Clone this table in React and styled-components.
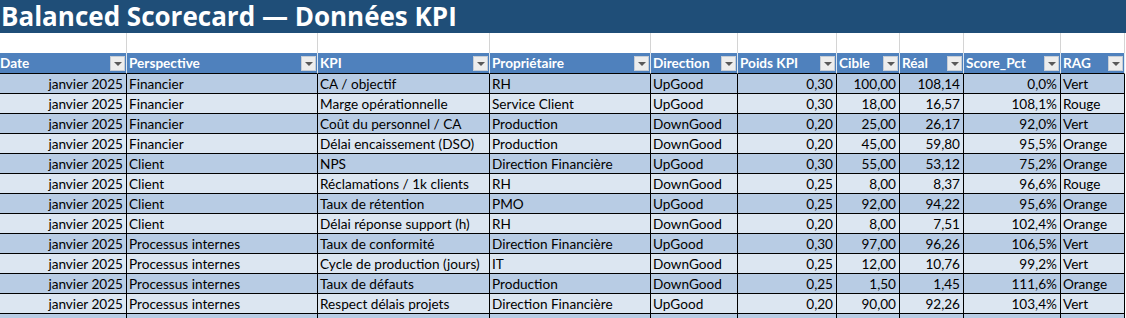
import styled, { createGlobalStyle } from "styled-components";

const GlobalStyle = createGlobalStyle`
  * { box-sizing: border-box; }
  body {
    margin: 0;
    background: #ffffff;
    font-family: Lato, "Open Sans", sans-serif;
  }
`;

const widths = [127, 191, 172, 161, 87, 99, 63, 64, 97, 64];
const template = widths.map((w) => `${w}px`).join(" ") + " 1fr";

const columns = [
  { label: "Date", align: "right", flush: true },
  { label: "Perspective" },
  { label: "KPI" },
  { label: "Propriétaire" },
  { label: "Direction" },
  { label: "Poids KPI", align: "right" },
  { label: "Cible", align: "right" },
  { label: "Réal", align: "right" },
  { label: "Score_Pct", align: "right" },
  { label: "RAG" },
];

const rows = [
  ["Financier", "CA / objectif", "RH", "UpGood", "0,30", "100,00", "108,14", "0,0%", "Vert"],
  ["Financier", "Marge opérationnelle", "Service Client", "UpGood", "0,30", "18,00", "16,57", "108,1%", "Rouge"],
  ["Financier", "Coût du personnel / CA", "Production", "DownGood", "0,20", "25,00", "26,17", "92,0%", "Vert"],
  ["Financier", "Délai encaissement (DSO)", "Production", "DownGood", "0,20", "45,00", "59,80", "95,5%", "Orange"],
  ["Client", "NPS", "Direction Financière", "UpGood", "0,30", "55,00", "53,12", "75,2%", "Orange"],
  ["Client", "Réclamations / 1k clients", "RH", "DownGood", "0,25", "8,00", "8,37", "96,6%", "Rouge"],
  ["Client", "Taux de rétention", "PMO", "UpGood", "0,25", "92,00", "94,22", "95,6%", "Orange"],
  ["Client", "Délai réponse support (h)", "RH", "DownGood", "0,20", "8,00", "7,51", "102,4%", "Orange"],
  ["Processus internes", "Taux de conformité", "Direction Financière", "UpGood", "0,30", "97,00", "96,26", "106,5%", "Vert"],
  ["Processus internes", "Cycle de production (jours)", "IT", "DownGood", "0,25", "12,00", "10,76", "99,2%", "Vert"],
  ["Processus internes", "Taux de défauts", "Production", "DownGood", "0,25", "1,50", "1,45", "111,6%", "Orange"],
  ["Processus internes", "Respect délais projets", "Direction Financière", "UpGood", "0,20", "90,00", "92,26", "103,4%", "Vert"],
  ["", "", "", "", "", "", "", "", ""],
];

const Sheet = styled.div`
  width: 1126px;
  height: 318px;
  overflow: hidden;
  display: flex;
  flex-direction: column;
`;

const TitleBar = styled.div`
  flex: none;
  height: 33px;
  background: #1f4e78;
  color: #ffffff;
  font-family: "Open Sans", Lato, sans-serif;
  font-weight: 700;
  font-size: 26px;
  line-height: 32px;
  padding-left: 1px;
  white-space: nowrap;
`;

const Row = styled.div`
  flex: none;
  display: grid;
  grid-template-columns: ${template};
  height: ${(p) => p.$height}px;
`;

const BlankCell = styled.div`
  border-right: 1px solid #d4d4d4;
  &:last-child { border-right: none; }
`;

const HeadCell = styled.div`
  display: flex;
  align-items: center;
  justify-content: space-between;
  background: #4f81bd;
  color: #ffffff;
  font-weight: 700;
  font-size: 13.6px;
  padding: 0 1px 0 ${(p) => (p.$flush ? 0 : 2)}px;
  border-right: 1px solid #dce6f1;
  border-bottom: 1px solid #000000;
  white-space: nowrap;
  overflow: hidden;
`;

const FilterButton = styled.span`
  flex: none;
  width: 15px;
  height: 15px;
  margin-top: 1px;
  background: #ededed;
  border: 1px solid #c6cdd6;
  display: flex;
  align-items: center;
  justify-content: center;
  &::after {
    content: "";
    border-left: 4px solid transparent;
    border-right: 4px solid transparent;
    border-top: 4px solid #595959;
    margin-top: 1px;
  }
`;

const Cell = styled.div`
  background: ${(p) => (p.$band ? "#b8cce4" : "#dce6f1")};
  border-right: 1px solid #000000;
  border-bottom: 1px solid #000000;
  color: #000000;
  font-size: 13.6px;
  line-height: 17px;
  padding: 2px 3px 0 2px;
  text-align: ${(p) => p.$align || "left"};
  white-space: nowrap;
  overflow: hidden;
`;

const App = () => {
  return (
    <>
      <GlobalStyle />
      <Sheet>
        <TitleBar>Balanced Scorecard — Données KPI</TitleBar>
        <Row $height={20}>
          {columns.map((c) => (
            <BlankCell key={c.label} />
          ))}
          <div />
        </Row>
        <Row $height={21}>
          {columns.map((c) => (
            <HeadCell key={c.label} $flush={c.flush}>
              <span>{c.label}</span>
              <FilterButton />
            </HeadCell>
          ))}
          <div />
        </Row>
        {rows.map((r, i) => (
          <Row key={i} $height={20}>
            <Cell $band={i % 2 === 0} $align="right">
              {r[0] ? "janvier 2025" : ""}
            </Cell>
            {r.map((v, j) => (
              <Cell key={j} $band={i % 2 === 0} $align={columns[j + 1].align}>
                {v}
              </Cell>
            ))}
            <div />
          </Row>
        ))}
      </Sheet>
    </>
  );
};

export default App;
